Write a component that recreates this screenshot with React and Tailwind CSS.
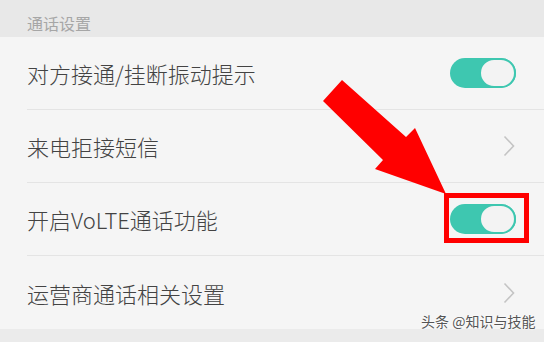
const rows = [
  { label: '对方接通/挂断振动提示', type: 'toggle' },
  { label: '来电拒接短信', type: 'chevron' },
  { label: '开启VoLTE通话功能', type: 'toggle', highlight: true },
  { label: '运营商通话相关设置', type: 'chevron' },
];

const Toggle = () => (
  <div className="flex h-[30px] w-[66px] justify-end rounded-full bg-[#3ec7b0]">
    <div className="h-[30px] w-[37px] rounded-full border-2 border-[#3ec7b0] bg-[#f3f3f3]" />
  </div>
);

const Chevron = () => (
  <svg width="12" height="22" viewBox="0 0 12 22" className="mr-[1px]">
    <path d="M1.5 1.5 L10.5 11 L1.5 20.5" fill="none" stroke="#c4c4c4" strokeWidth="1.6" />
  </svg>
);

export default function App() {
  return (
    <div
      className="relative h-[342px] w-[544px] overflow-hidden bg-[#f5f5f5]"
      style={{ fontFamily: '"Noto Sans CJK SC", "Noto Sans", sans-serif' }}
    >
      <div className="flex h-[37px] items-end bg-[#e8e8e8] pb-[6px] pl-[27px] text-[16px] leading-none text-[#a6a6a6]">
        通话设置
      </div>

      <div className="flex flex-col">
        {rows.map((row, i) => (
          <div key={row.label} className="flex h-[73px] flex-col pl-[27px]">
            <div className="flex flex-1 items-center justify-between pr-[28px]">
              <span className="text-[22px] font-light leading-none text-[#434343]">{row.label}</span>
              <div className={row.highlight ? 'relative' : ''}>
                {row.type === 'toggle' ? <Toggle /> : <Chevron />}
                {row.highlight && (
                  <div className="absolute left-[-6px] top-[-11px] h-[50px] w-[85px] border-[5px] border-[#ff0000]" />
                )}
              </div>
            </div>
            {i < rows.length - 1 && <div className="h-px bg-[#e4e4e4]" />}
          </div>
        ))}
      </div>

      <div className="h-[13px] bg-[#ebebeb]" />

      <svg className="absolute left-0 top-0" width="544" height="342" viewBox="0 0 544 342">
        <polygon
          points="342,80 406,137 415,128 446,194 375,169 383,160 323,101"
          fill="#ff0000"
        />
      </svg>

      <div
        className="absolute left-[421px] top-[314px] text-[14px] leading-none text-[#555]"
        style={{ textShadow: '0 0 2px #fff, 0 0 2px #fff' }}
      >
        头条 @知识与技能
      </div>
    </div>
  );
}
